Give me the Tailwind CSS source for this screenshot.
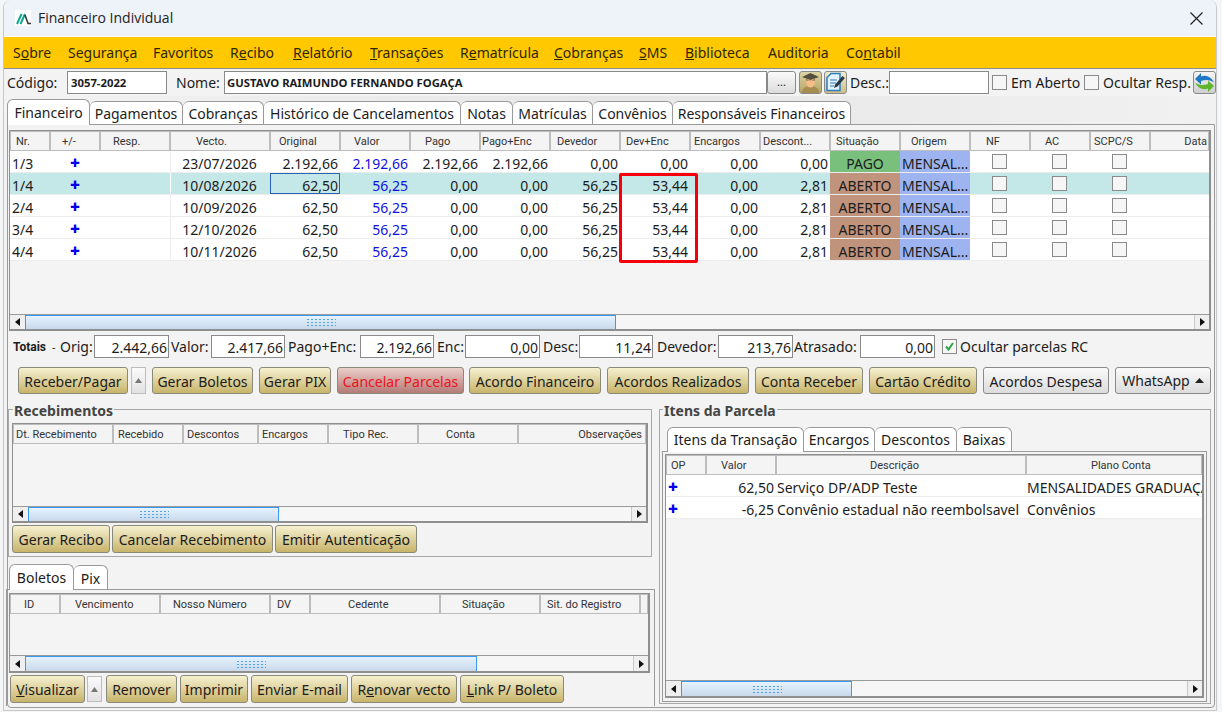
<!DOCTYPE html>
<html><head><meta charset="utf-8"><script src="https://cdn.jsdelivr.net/npm/@tailwindcss/browser@4"></script></head>
<body class="m-0 bg-[#f4f5f6] overflow-hidden">
<div class="w-[1222px] h-[712px] overflow-hidden font-['Noto_Sans',sans-serif] text-[14px] leading-[20px] text-[#1c1c1c] bg-[#f4f5f6] pl-[3px] pr-[5px]">
<div class="h-[711px] border-x border-b border-[#c8c8c8] rounded-t-lg bg-[#f3f3f3] flex flex-col">
  <!-- title -->
  <div class="h-[36px] shrink-0 bg-[#eef3fa] rounded-t-lg flex items-center pl-[11px] pr-[13px] font-['Open_Sans',sans-serif]">
    <div class="w-[16px] h-[16px] bg-white flex items-center justify-center mr-[7px]">
      <svg width="15" height="13" viewBox="0 0 15 13"><path d="M1 12 5.500 2M4.500 12 9 2" stroke="#12a88f" stroke-width="2" fill="none"/><path d="M9 3l3 8.500h3" stroke="#333" stroke-width="1.500" fill="none"/></svg>
    </div>
    <span class="text-[14px] text-[#222]">Financeiro Individual</span>
    <svg class="ml-auto" width="13" height="13" viewBox="0 0 13 13"><path d="M.5.5l12 12M12.500.5l-12 12" stroke="#222" stroke-width="1.200"/></svg>
  </div>
  <!-- menu -->
  <div class="h-[33px] shrink-0 bg-[#ffc800] border-t border-b border-t-white border-b-[#8d8d8d] flex items-center pl-[9px] text-[#2e2600] whitespace-nowrap">
    <span class="w-[55px]">S<u>o</u>bre</span><span class="w-[85px]">Segurança</span><span class="w-[77px]">Favoritos</span><span class="w-[63px]">R<u>e</u>cibo</span><span class="w-[77px]"><u>R</u>elatório</span><span class="w-[90px]"><u>T</u>ransações</span><span class="w-[94px]">R<u>e</u>matrícula</span><span class="w-[85px]"><u>C</u>obranças</span><span class="w-[46px]"><u>S</u>MS</span><span class="w-[83px]"><u>B</u>iblioteca</span><span class="w-[78px]">Auditoria</span><span>Co<u>n</u>tabil</span>
  </div>
  <!-- code row -->
  <div class="h-[27px] shrink-0 flex items-center pl-[3px] whitespace-nowrap">
    <span class="w-[60px] leading-[24px] pt-[1px]">Código:</span>
    <div class="w-[100px] h-[23px] bg-white border border-[#8a8a8a] pl-[3px] text-[11.300px] font-bold leading-[21px]">3057-2022</div>
    <span class="ml-[9px] w-[48px] pt-[1px]">Nome:</span>
    <div class="w-[543px] h-[23px] bg-white border border-[#8a8a8a] pl-[2px] text-[11.300px] font-bold leading-[21px]">GUSTAVO RAIMUNDO FERNANDO FOGAÇA</div>
    <div class="w-[29px] h-[23px] border border-[#8a8a8a] rounded-[3px] bg-gradient-to-b from-[#fafafa] to-[#dcdcdc] text-[11px] text-center leading-[20px]">...</div>
    <div class="ml-[3px] w-[23px] h-[23px] border border-[#8a8a8a] rounded-[3px] bg-gradient-to-b from-[#ddd4a4] to-[#b5a364] flex items-center justify-center">
      <svg width="21" height="21" viewBox="0 0 21 21"><path d="M2 21c0-5 4-7 8.500-7s8.500 2 8.500 7z" fill="#a58d52"/><ellipse cx="10.500" cy="10" rx="4.500" ry="5.500" fill="#f6bd86"/><path d="M2 5l8.500-4 8.500 4-8.500 3z" fill="#55503c"/><path d="M6 7l4.500 2 4.500-2v1.500H6z" fill="#6b6448"/></svg>
    </div>
    <div class="ml-[2px] w-[23px] h-[23px] border border-[#8a8a8a] rounded-[3px] bg-gradient-to-b from-[#f2edcf] to-[#cdbf82] flex items-center justify-center">
      <svg width="21" height="21" viewBox="0 0 21 21"><path d="M6 1.500h9v17H2v-13z" fill="#e6f2fb" stroke="#2b7dc0" stroke-width="1.500"/><path d="M5 8h7M5 11h6M5 14h4" stroke="#2b7dc0" stroke-width="1.200"/><path d="M9 16l1.200-3.500L17.500 4l2.300 2-7.300 8.500z" fill="#26384a"/></svg>
    </div>
    <span class="ml-[3px] w-[39px] pt-[1px]">Desc.:</span>
    <div class="w-[100px] h-[23px] bg-white border border-[#8a8a8a]"></div>
    <div class="ml-[3px] w-[15px] h-[15px] border border-[#8a8a8a] bg-[#f6f6f6]"></div>
    <span class="ml-[4px] w-[73px] pt-[1px]">Em Aberto</span>
    <div class="w-[15px] h-[15px] border border-[#8a8a8a] bg-[#f6f6f6]"></div>
    <span class="ml-[4px] w-[90px] pt-[1px]">Ocultar Resp.</span>
    <div class="w-[23px] h-[23px] border border-[#8a8a8a] rounded-[3px] bg-gradient-to-b from-[#f4f4f4] to-[#cfcfcf] flex items-center justify-center">
      <svg width="21" height="21" viewBox="0 0 21 21"><path d="M1 7l6-6v3.500c5-2 10 0 13 6-3-2.500-8-3.500-13-1.500v3.500z" fill="#1d78c8"/><path d="M20 14l-6 6v-3.500c-5 2-10 0-13-6 3 2.500 8 3.500 13 1.500V8.500z" fill="#5fb52c"/></svg>
    </div>
  </div>
  <!-- main tabs -->
  <div class="h-[28px] shrink-0 flex items-end pl-[3px] bg-gradient-to-r from-[#f3f3f3] via-[#e6e6e6] to-[#f1f1f1] whitespace-nowrap">
    <div class="h-[26px] -mb-px z-10 w-[83px] text-center leading-[26px] bg-white border border-b-0 border-[#9a9a9a] rounded-t-[6px]">Financeiro</div>
    <div class="h-[23px] w-[93px] text-center leading-[24px] bg-white border border-l-0 border-b-0 border-[#9a9a9a] rounded-t-[6px]">Pagamentos</div>
    <div class="h-[23px] w-[81px] text-center leading-[24px] bg-white border border-l-0 border-b-0 border-[#9a9a9a] rounded-t-[6px]">Cobranças</div>
    <div class="h-[23px] w-[197px] text-center leading-[24px] bg-white border border-l-0 border-b-0 border-[#9a9a9a] rounded-t-[6px]">Histórico de Cancelamentos</div>
    <div class="h-[23px] w-[52px] text-center leading-[24px] bg-white border border-l-0 border-b-0 border-[#9a9a9a] rounded-t-[6px]">Notas</div>
    <div class="h-[23px] w-[80px] text-center leading-[24px] bg-white border border-l-0 border-b-0 border-[#9a9a9a] rounded-t-[6px]">Matrículas</div>
    <div class="h-[23px] w-[80px] text-center leading-[24px] bg-white border border-l-0 border-b-0 border-[#9a9a9a] rounded-t-[6px]">Convênios</div>
    <div class="h-[23px] w-[178px] text-center leading-[24px] bg-white border border-l-0 border-b-0 border-[#9a9a9a] rounded-t-[6px]">Responsáveis Financeiros</div>
  </div>
  <!-- main panel -->
  <div class="flex-1 ml-[3px] mr-[1px] border border-[#9a9a9a] rounded-b-[4px] bg-[#f3f3f3] flex flex-col pl-[1px] pt-[5px] min-h-0">
    <!-- main grid -->
    <div class="h-[201px] shrink-0 border-l border-t border-r-2 border-b-2 border-[#8f8f8f] flex flex-col bg-[#f4f4f4] w-[1202px]">
      <div class="h-[20px] shrink-0 flex font-['Roboto',sans-serif] text-[11px] leading-[19px] text-[#333] whitespace-nowrap">
        <div class="w-[40px] border border-[#bdbdbd] pl-[5px]">Nr.</div><div class="w-[50px] border border-[#bdbdbd] pl-[11px]">+/-</div><div class="w-[70px] border border-[#bdbdbd] pl-[12px]">Resp.</div><div class="w-[100px] border border-[#bdbdbd] pl-[25px]">Vecto.</div><div class="w-[70px] border border-[#bdbdbd] pl-[8px]">Original</div><div class="w-[70px] border border-[#bdbdbd] pl-[13px]">Valor</div><div class="w-[70px] border border-[#bdbdbd] pl-[14px]">Pago</div><div class="w-[70px] border border-[#bdbdbd] pl-[1px]">Pago+Enc</div><div class="w-[70px] border border-[#bdbdbd] pl-[6px]">Devedor</div><div class="w-[70px] border border-[#bdbdbd] pl-[5px]">Dev+Enc</div><div class="w-[70px] border border-[#bdbdbd] pl-[3px]">Encargos</div><div class="w-[70px] border border-[#bdbdbd] pl-[2px]">Descont...</div><div class="w-[70px] border border-[#bdbdbd] pl-[5px]">Situação</div><div class="w-[70px] border border-[#bdbdbd] pl-[10px]">Origem</div><div class="w-[60px] border border-[#bdbdbd] pl-[15px]">NF</div><div class="w-[60px] border border-[#bdbdbd] pl-[14px]">AC</div><div class="w-[60px] border border-[#bdbdbd] pl-[3px]">SCPC/S</div><div class="flex-1 border border-[#bdbdbd] text-right pr-[1px]">Data</div>
      </div>
      <div class="relative">
        <div class="h-[22px] flex bg-white leading-[25px] border-b border-[#ececec]">
          <div class="w-[40px] pl-[2px]">1/3</div><div class="w-[50px] text-center text-[#0000ee] text-[17px] font-black leading-[24px]">+</div><div class="w-[70px]"></div><div class="w-[100px] text-center pr-[2px] border-l border-[#ececec]">23/07/2026</div><div class="w-[70px] text-right pr-[2px]">2.192,66</div><div class="w-[70px] text-right pr-[2px] text-[#1111dd]">2.192,66</div><div class="w-[70px] text-right pr-[2px]">2.192,66</div><div class="w-[70px] text-right pr-[2px]">2.192,66</div><div class="w-[70px] text-right pr-[2px]">0,00</div><div class="w-[70px] text-right pr-[2px]">0,00</div><div class="w-[70px] text-right pr-[2px]">0,00</div><div class="w-[70px] text-right pr-[2px]">0,00</div><div class="w-[70px] text-center bg-[#78c07c]">PAGO</div><div class="w-[70px] bg-[#9db4f0] pl-[2px] whitespace-nowrap overflow-hidden">MENSAL...</div><div class="w-[60px] pr-[2px] flex items-center justify-center"><div class="w-[15px] h-[15px] border border-[#8a8a8a] bg-[#f6f6f6]"></div></div><div class="w-[60px] pr-[2px] flex items-center justify-center"><div class="w-[15px] h-[15px] border border-[#8a8a8a] bg-[#f6f6f6]"></div></div><div class="w-[60px] pr-[2px] flex items-center justify-center"><div class="w-[15px] h-[15px] border border-[#8a8a8a] bg-[#f6f6f6]"></div></div><div class="flex-1"></div>
        </div>
        <div class="h-[22px] flex bg-[#c3e8e7] leading-[25px] border-b border-[#ececec]">
          <div class="w-[40px] pl-[2px]">1/4</div><div class="w-[50px] text-center text-[#0000ee] text-[17px] font-black leading-[24px]">+</div><div class="w-[70px]"></div><div class="w-[100px] text-center pr-[2px] border-l border-white">10/08/2026</div><div class="w-[70px] text-right pr-[1px] border border-[#2a62b8] bg-[#c3e8e7] leading-[23px]">62,50</div><div class="w-[70px] text-right pr-[2px] text-[#1111dd]">56,25</div><div class="w-[70px] text-right pr-[2px]">0,00</div><div class="w-[70px] text-right pr-[2px]">0,00</div><div class="w-[70px] text-right pr-[2px]">56,25</div><div class="w-[70px] text-right pr-[2px]">53,44</div><div class="w-[70px] text-right pr-[2px]">0,00</div><div class="w-[70px] text-right pr-[2px]">2,81</div><div class="w-[70px] text-center bg-[#c0937c]">ABERTO</div><div class="w-[70px] bg-[#9db4f0] pl-[2px] whitespace-nowrap overflow-hidden">MENSAL...</div><div class="w-[60px] pr-[2px] flex items-center justify-center"><div class="w-[15px] h-[15px] border border-[#8a8a8a] bg-[#f6f6f6]"></div></div><div class="w-[60px] pr-[2px] flex items-center justify-center"><div class="w-[15px] h-[15px] border border-[#8a8a8a] bg-[#f6f6f6]"></div></div><div class="w-[60px] pr-[2px] flex items-center justify-center"><div class="w-[15px] h-[15px] border border-[#8a8a8a] bg-[#f6f6f6]"></div></div><div class="flex-1"></div>
        </div>
        <div class="h-[22px] flex bg-white leading-[25px] border-b border-[#ececec]">
          <div class="w-[40px] pl-[2px]">2/4</div><div class="w-[50px] text-center text-[#0000ee] text-[17px] font-black leading-[24px]">+</div><div class="w-[70px]"></div><div class="w-[100px] text-center pr-[2px] border-l border-[#ececec]">10/09/2026</div><div class="w-[70px] text-right pr-[2px]">62,50</div><div class="w-[70px] text-right pr-[2px] text-[#1111dd]">56,25</div><div class="w-[70px] text-right pr-[2px]">0,00</div><div class="w-[70px] text-right pr-[2px]">0,00</div><div class="w-[70px] text-right pr-[2px]">56,25</div><div class="w-[70px] text-right pr-[2px]">53,44</div><div class="w-[70px] text-right pr-[2px]">0,00</div><div class="w-[70px] text-right pr-[2px]">2,81</div><div class="w-[70px] text-center bg-[#c0937c]">ABERTO</div><div class="w-[70px] bg-[#9db4f0] pl-[2px] whitespace-nowrap overflow-hidden">MENSAL...</div><div class="w-[60px] pr-[2px] flex items-center justify-center"><div class="w-[15px] h-[15px] border border-[#8a8a8a] bg-[#f6f6f6]"></div></div><div class="w-[60px] pr-[2px] flex items-center justify-center"><div class="w-[15px] h-[15px] border border-[#8a8a8a] bg-[#f6f6f6]"></div></div><div class="w-[60px] pr-[2px] flex items-center justify-center"><div class="w-[15px] h-[15px] border border-[#8a8a8a] bg-[#f6f6f6]"></div></div><div class="flex-1"></div>
        </div>
        <div class="h-[22px] flex bg-white leading-[25px] border-b border-[#ececec]">
          <div class="w-[40px] pl-[2px]">3/4</div><div class="w-[50px] text-center text-[#0000ee] text-[17px] font-black leading-[24px]">+</div><div class="w-[70px]"></div><div class="w-[100px] text-center pr-[2px] border-l border-[#ececec]">12/10/2026</div><div class="w-[70px] text-right pr-[2px]">62,50</div><div class="w-[70px] text-right pr-[2px] text-[#1111dd]">56,25</div><div class="w-[70px] text-right pr-[2px]">0,00</div><div class="w-[70px] text-right pr-[2px]">0,00</div><div class="w-[70px] text-right pr-[2px]">56,25</div><div class="w-[70px] text-right pr-[2px]">53,44</div><div class="w-[70px] text-right pr-[2px]">0,00</div><div class="w-[70px] text-right pr-[2px]">2,81</div><div class="w-[70px] text-center bg-[#c0937c]">ABERTO</div><div class="w-[70px] bg-[#9db4f0] pl-[2px] whitespace-nowrap overflow-hidden">MENSAL...</div><div class="w-[60px] pr-[2px] flex items-center justify-center"><div class="w-[15px] h-[15px] border border-[#8a8a8a] bg-[#f6f6f6]"></div></div><div class="w-[60px] pr-[2px] flex items-center justify-center"><div class="w-[15px] h-[15px] border border-[#8a8a8a] bg-[#f6f6f6]"></div></div><div class="w-[60px] pr-[2px] flex items-center justify-center"><div class="w-[15px] h-[15px] border border-[#8a8a8a] bg-[#f6f6f6]"></div></div><div class="flex-1"></div>
        </div>
        <div class="h-[22px] flex bg-white leading-[25px] border-b border-[#ececec]">
          <div class="w-[40px] pl-[2px]">4/4</div><div class="w-[50px] text-center text-[#0000ee] text-[17px] font-black leading-[24px]">+</div><div class="w-[70px]"></div><div class="w-[100px] text-center pr-[2px] border-l border-[#ececec]">10/11/2026</div><div class="w-[70px] text-right pr-[2px]">62,50</div><div class="w-[70px] text-right pr-[2px] text-[#1111dd]">56,25</div><div class="w-[70px] text-right pr-[2px]">0,00</div><div class="w-[70px] text-right pr-[2px]">0,00</div><div class="w-[70px] text-right pr-[2px]">56,25</div><div class="w-[70px] text-right pr-[2px]">53,44</div><div class="w-[70px] text-right pr-[2px]">0,00</div><div class="w-[70px] text-right pr-[2px]">2,81</div><div class="w-[70px] text-center bg-[#c0937c]">ABERTO</div><div class="w-[70px] bg-[#9db4f0] pl-[2px] whitespace-nowrap overflow-hidden">MENSAL...</div><div class="w-[60px] pr-[2px] flex items-center justify-center"><div class="w-[15px] h-[15px] border border-[#8a8a8a] bg-[#f6f6f6]"></div></div><div class="w-[60px] pr-[2px] flex items-center justify-center"><div class="w-[15px] h-[15px] border border-[#8a8a8a] bg-[#f6f6f6]"></div></div><div class="w-[60px] pr-[2px] flex items-center justify-center"><div class="w-[15px] h-[15px] border border-[#8a8a8a] bg-[#f6f6f6]"></div></div><div class="flex-1"></div>
        </div>
        <div class="absolute left-[609px] top-[22px] w-[79px] h-[90px] border-[3px] border-[#f5000a] rounded-[2px]"></div>
      </div>
      <div class="flex-1"></div>
      <!-- scrollbar -->
      <div class="h-[15px] shrink-0 flex border-t border-[#9a9a9a] bg-[#f6f6f6]">
        <div class="w-[15px] flex items-center justify-center bg-[#efefef]"><svg width="5" height="8"><path d="M5 0v8L0 4z" fill="#111"/></svg></div>
        <div class="w-[591px] bg-gradient-to-b from-[#e6f3ff] to-[#c9d9ea] border-x border-t border-[#3b9af0] flex items-center justify-center"><div class="w-[30px] h-[9px] bg-[radial-gradient(#4aa3f0_1px,transparent_1px)] bg-[length:4px_3px]"></div></div>
        <div class="flex-1"></div>
        <div class="w-[15px] flex items-center justify-center bg-[#efefef] border-l border-[#c8c8c8]"><svg width="5" height="8"><path d="M0 0v8l5-4z" fill="#111"/></svg></div>
      </div>
    </div>
    <!-- totals -->
    <div class="h-[23px] mt-[4px] shrink-0 flex items-center pl-[4px] whitespace-nowrap leading-[24px]">
      <span class="font-['Roboto',sans-serif] text-[12px] font-bold w-[39px]">Totais</span><span class="text-[11px] w-[8px]">-</span>
      <span class="w-[34px]">Orig:</span><div class="w-[75px] h-[23px] border border-[#8a8a8a] bg-white text-right pr-[1px] leading-[24px]">2.442,66</div>
      <span class="ml-[2px] w-[40px]">Valor:</span><div class="w-[74px] h-[23px] border border-[#8a8a8a] bg-white text-right pr-[1px] leading-[24px]">2.417,66</div>
      <span class="ml-[3px] w-[72px]">Pago+Enc:</span><div class="w-[74px] h-[23px] border border-[#8a8a8a] bg-white text-right pr-[1px] leading-[24px]">2.192,66</div>
      <span class="ml-[3px] w-[28px]">Enc:</span><div class="w-[75px] h-[23px] border border-[#8a8a8a] bg-white text-right pr-[1px] leading-[24px]">0,00</div>
      <span class="ml-[3px] w-[36px]">Desc:</span><div class="w-[74px] h-[23px] border border-[#8a8a8a] bg-white text-right pr-[1px] leading-[24px]">11,24</div>
      <span class="ml-[4px] w-[61px]">Devedor:</span><div class="w-[75px] h-[23px] border border-[#8a8a8a] bg-white text-right pr-[1px] leading-[24px]">213,76</div>
      <span class="ml-[1px] w-[66px]">Atrasado:</span><div class="w-[75px] h-[23px] border border-[#8a8a8a] bg-white text-right pr-[1px] leading-[24px]">0,00</div>
      <div class="ml-[7px] w-[15px] h-[15px] border border-[#8a8a8a] bg-[#f6f6f6] flex items-center justify-center"><svg width="11" height="11" viewBox="0 0 11 11"><path d="M2 5.500l2.500 3L9 2" stroke="#2fa84a" stroke-width="2" fill="none"/></svg></div>
      <span class="ml-[3px]">Ocultar parcelas RC</span>
    </div>
    <!-- action buttons -->
    <div class="h-[27px] mt-[9px] shrink-0 flex pl-[9px] gap-[6px] whitespace-nowrap leading-[27px] text-center">
      <div class="w-[110px] border border-[#8a8a7a] rounded-[3px] bg-gradient-to-b from-[#f5f0cf] to-[#c8b46a]">Receber/Pagar</div>
      <div class="-ml-[3px] w-[15px] border border-[#bdbdbd] bg-gradient-to-b from-[#fafafa] to-[#e2e2e2] flex items-center justify-center"><svg width="7" height="5"><path d="M0 5h7L3.500 0z" fill="#777"/></svg></div>
      <div class="w-[101px] border border-[#8a8a7a] rounded-[3px] bg-gradient-to-b from-[#f5f0cf] to-[#c8b46a]">Gerar Boletos</div>
      <div class="w-[72px] border border-[#8a8a7a] rounded-[3px] bg-gradient-to-b from-[#f5f0cf] to-[#c8b46a]">Gerar PIX</div>
      <div class="w-[127px] border border-[#8a8a7a] rounded-[3px] bg-gradient-to-b from-[#ebcfc9] to-[#b47b77] text-[#f01020]">Cancelar Parcelas</div>
      <div class="w-[132px] -ml-px border border-[#8a8a7a] rounded-[3px] bg-gradient-to-b from-[#f5f0cf] to-[#c8b46a]">Acordo Financeiro</div>
      <div class="w-[142px] border border-[#8a8a7a] rounded-[3px] bg-gradient-to-b from-[#f5f0cf] to-[#c8b46a]">Acordos Realizados</div>
      <div class="w-[108px] border border-[#8a8a7a] rounded-[3px] bg-gradient-to-b from-[#f5f0cf] to-[#c8b46a]">Conta Receber</div>
      <div class="w-[108px] border border-[#8a8a7a] rounded-[3px] bg-gradient-to-b from-[#f5f0cf] to-[#c8b46a]">Cartão Crédito</div>
      <div class="w-[126px] border border-[#8a8a8a] rounded-[3px] bg-gradient-to-b from-[#fafafa] to-[#dcdcdc]">Acordos Despesa</div>
      <div class="w-[96px] border border-[#8a8a8a] rounded-[3px] bg-gradient-to-b from-[#fafafa] to-[#dcdcdc] flex items-center justify-center gap-[5px]">WhatsApp<svg width="9" height="5"><path d="M0 5h9L4.500 0z" fill="#222"/></svg></div>
    </div>
    <!-- lower -->
    <div class="flex-1 mt-[15px] flex min-h-0">
      <div class="w-[647px] shrink-0 -ml-[2px] flex flex-col">
        <!-- recebimentos -->
        <div class="relative h-[148px] ml-[1px] w-[644px] shrink-0 border border-[#a8a8a8] pt-[13px] px-[3px]">
          <span class="absolute left-[4px] -top-[7px] bg-[#f3f3f3] text-[14px] font-bold text-[#444] px-[1px] leading-[16px]">Recebimentos</span>
          <div class="h-[100px] border-l border-t border-r-2 border-b-2 border-[#8f8f8f] flex flex-col bg-[#f4f4f4]">
            <div class="h-[20px] shrink-0 flex font-['Roboto',sans-serif] text-[11px] leading-[19px] text-[#333] whitespace-nowrap">
              <div class="w-[100px] border border-[#bdbdbd] pl-[2px]">Dt. Recebimento</div><div class="w-[70px] border border-[#bdbdbd] pl-[4px]">Recebido</div><div class="w-[75px] border border-[#bdbdbd] pl-[3px]">Descontos</div><div class="w-[70px] border border-[#bdbdbd] pl-[3px]">Encargos</div><div class="w-[90px] border border-[#bdbdbd] pl-[14px]">Tipo Rec.</div><div class="w-[100px] border border-[#bdbdbd] pl-[27px]">Conta</div><div class="flex-1 border border-[#bdbdbd] text-right pr-[3px]">Observações</div>
            </div>
            <div class="flex-1"></div>
            <div class="h-[15px] shrink-0 flex border-t border-[#9a9a9a] bg-[#f6f6f6]">
              <div class="w-[15px] flex items-center justify-center bg-[#efefef]"><svg width="5" height="8"><path d="M5 0v8L0 4z" fill="#111"/></svg></div>
              <div class="w-[251px] bg-gradient-to-b from-[#e6f3ff] to-[#c9d9ea] border-x border-t border-[#3b9af0] flex items-center justify-center"><div class="w-[30px] h-[9px] bg-[radial-gradient(#4aa3f0_1px,transparent_1px)] bg-[length:4px_3px]"></div></div>
              <div class="flex-1"></div>
              <div class="w-[15px] flex items-center justify-center bg-[#efefef] border-l border-[#c8c8c8]"><svg width="5" height="8"><path d="M0 0v8l5-4z" fill="#111"/></svg></div>
            </div>
          </div>
          <div class="flex mt-[2px] h-[28px] gap-[2px] leading-[28px] text-center whitespace-nowrap">
            <div class="w-[98px] border border-[#8a8a7a] rounded-[3px] bg-gradient-to-b from-[#f5f0cf] to-[#c8b46a]">Gerar Recibo</div>
            <div class="w-[161px] border border-[#8a8a7a] rounded-[3px] bg-gradient-to-b from-[#f5f0cf] to-[#c8b46a]">Cancelar Recebimento</div>
            <div class="w-[142px] border border-[#8a8a7a] rounded-[3px] bg-gradient-to-b from-[#f5f0cf] to-[#c8b46a]">Emitir Autenticação</div>
          </div>
        </div>
        <!-- boletos tabs -->
        <div class="h-[25px] mt-[7px] shrink-0 flex items-end pl-[2px]">
          <div class="h-[26px] -mb-px z-10 w-[65px] text-center leading-[26px] bg-white border border-b-0 border-[#9a9a9a] rounded-t-[6px]">Boletos</div>
          <div class="h-[24px] w-[34px] text-center leading-[25px] bg-white border border-l-0 border-b-0 border-[#9a9a9a] rounded-t-[6px]">Pix</div>
        </div>
        <div class="h-[117px] shrink-0 w-[649px] -ml-[1px] border-t border-x border-[#9a9a9a] pt-[3px] pl-[2px] pr-[4px]">
          <div class="h-[80px] border-l border-t border-r-2 border-b-2 border-[#8f8f8f] flex flex-col bg-[#f4f4f4]">
            <div class="h-[20px] shrink-0 flex font-['Roboto',sans-serif] text-[11px] leading-[19px] text-[#333] whitespace-nowrap">
              <div class="w-[50px] border border-[#bdbdbd] pl-[13px]">ID</div><div class="w-[100px] border border-[#bdbdbd] pl-[14px]">Vencimento</div><div class="w-[110px] border border-[#bdbdbd] pl-[12px]">Nosso Número</div><div class="w-[40px] border border-[#bdbdbd] pl-[6px]">DV</div><div class="w-[130px] border border-[#bdbdbd] pl-[37px]">Cedente</div><div class="w-[100px] border border-[#bdbdbd] pl-[21px]">Situação</div><div class="w-[100px] border border-[#bdbdbd] pl-[6px]">Sit. do Registro</div><div class="flex-1 border border-[#bdbdbd]"></div>
            </div>
            <div class="flex-1"></div>
            <div class="h-[16px] shrink-0 flex border-t border-[#9a9a9a] bg-[#f6f6f6]">
              <div class="w-[15px] flex items-center justify-center bg-[#efefef]"><svg width="5" height="8"><path d="M5 0v8L0 4z" fill="#111"/></svg></div>
              <div class="w-[452px] bg-gradient-to-b from-[#e6f3ff] to-[#c9d9ea] border-x border-t border-[#3b9af0] flex items-center justify-center"><div class="w-[30px] h-[9px] bg-[radial-gradient(#4aa3f0_1px,transparent_1px)] bg-[length:4px_3px]"></div></div>
              <div class="flex-1"></div>
              <div class="w-[15px] flex items-center justify-center bg-[#efefef] border-l border-[#c8c8c8]"><svg width="5" height="8"><path d="M0 0v8l5-4z" fill="#111"/></svg></div>
            </div>
          </div>
          <div class="flex mt-[2px] ml-[1px] h-[28px] gap-[3px] leading-[28px] text-center whitespace-nowrap">
            <div class="w-[75px] border border-[#8a8a7a] rounded-[3px] bg-gradient-to-b from-[#f5f0cf] to-[#c8b46a]"><u>V</u>isualizar</div>
            <div class="-ml-px w-[15px] h-[26px] mt-[1px] border border-[#bdbdbd] bg-gradient-to-b from-[#fafafa] to-[#e2e2e2] flex items-center justify-center"><svg width="7" height="5"><path d="M0 5h7L3.500 0z" fill="#777"/></svg></div>
            <div class="ml-px w-[71px] border border-[#8a8a7a] rounded-[3px] bg-gradient-to-b from-[#f5f0cf] to-[#c8b46a]">Remover</div>
            <div class="w-[68px] border border-[#8a8a7a] rounded-[3px] bg-gradient-to-b from-[#f5f0cf] to-[#c8b46a]">Imprimir</div>
            <div class="w-[97px] border border-[#8a8a7a] rounded-[3px] bg-gradient-to-b from-[#f5f0cf] to-[#c8b46a]">Enviar E-mail</div>
            <div class="w-[106px] border border-[#8a8a7a] rounded-[3px] bg-gradient-to-b from-[#f5f0cf] to-[#c8b46a]">R<u>e</u>novar vecto</div>
            <div class="w-[104px] border border-[#8a8a7a] rounded-[3px] bg-gradient-to-b from-[#f5f0cf] to-[#c8b46a]"><u>L</u>ink P/ Boleto</div>
          </div>
        </div>
      </div>
      <!-- itens -->
      <div class="relative ml-[5px] w-[552px] h-[295px] shrink-0 border border-[#a8a8a8] pt-[16px] px-[2px]">
        <span class="absolute left-[3px] -top-[7px] bg-[#f3f3f3] text-[14px] font-bold text-[#444] px-[1px] leading-[16px]">Itens da Parcela</span>
        <div class="h-[25px] flex items-end pl-[5px] whitespace-nowrap">
          <div class="h-[25px] -mb-px z-10 w-[137px] text-center leading-[24px] bg-white border border-b-0 border-[#9a9a9a] rounded-t-[6px]">Itens da Transação</div>
          <div class="h-[24px] w-[71px] text-center leading-[24px] bg-white border border-l-0 border-b-0 border-[#9a9a9a] rounded-t-[6px]">Encargos</div>
          <div class="h-[24px] w-[82px] text-center leading-[24px] bg-white border border-l-0 border-b-0 border-[#9a9a9a] rounded-t-[6px]">Descontos</div>
          <div class="h-[24px] w-[55px] text-center leading-[24px] bg-white border border-l-0 border-b-0 border-[#9a9a9a] rounded-t-[6px]">Baixas</div>
        </div>
        <div class="h-[251px] border border-[#9a9a9a] pt-[2px] pb-[3px] px-[2px] w-[545px]">
          <div class="h-full border-l border-t border-r-2 border-b-2 border-[#8f8f8f] flex flex-col bg-[#f4f4f4]">
            <div class="h-[20px] shrink-0 flex font-['Roboto',sans-serif] text-[11px] leading-[19px] text-[#333] whitespace-nowrap">
              <div class="w-[40px] border border-[#bdbdbd] pl-[4px]">OP</div><div class="w-[70px] border border-[#bdbdbd] pl-[14px]">Valor</div><div class="w-[250px] border border-[#bdbdbd] pl-[93px]">Descrição</div><div class="flex-1 border border-[#bdbdbd] pl-[64px]">Plano Conta</div>
            </div>
            <div class="h-[22px] flex bg-white leading-[25px] border-b border-[#ececec] whitespace-nowrap overflow-hidden">
              <div class="w-[40px] pl-[2px] text-[#0000ee] text-[17px] font-black leading-[24px]">+</div><div class="w-[70px] text-right pr-[2px]">62,50</div><div class="w-[250px] pl-[1px]">Serviço DP/ADP Teste</div><div class="flex-1 pl-[1px] overflow-hidden">MENSALIDADES GRADUAÇÃO</div>
            </div>
            <div class="h-[22px] flex bg-white leading-[25px] border-b border-[#ececec] whitespace-nowrap overflow-hidden">
              <div class="w-[40px] pl-[2px] text-[#0000ee] text-[17px] font-black leading-[24px]">+</div><div class="w-[70px] text-right pr-[2px]">-6,25</div><div class="w-[250px] pl-[1px]">Convênio estadual não reembolsavel</div><div class="flex-1 pl-[1px]">Convênios</div>
            </div>
            <div class="flex-1"></div>
            <div class="h-[16px] shrink-0 flex border-t border-[#9a9a9a] bg-[#f6f6f6]">
              <div class="w-[15px] flex items-center justify-center bg-[#efefef]"><svg width="5" height="8"><path d="M5 0v8L0 4z" fill="#111"/></svg></div>
              <div class="w-[171px] bg-gradient-to-b from-[#e6f3ff] to-[#c9d9ea] border-x border-t border-[#3b9af0] flex items-center justify-center"><div class="w-[30px] h-[9px] bg-[radial-gradient(#4aa3f0_1px,transparent_1px)] bg-[length:4px_3px]"></div></div>
              <div class="flex-1"></div>
              <div class="w-[15px] flex items-center justify-center bg-[#efefef] border-l border-[#c8c8c8]"><svg width="5" height="8"><path d="M0 0v8l5-4z" fill="#111"/></svg></div>
            </div>
          </div>
        </div>
      </div>
    </div>
  </div>
  <div class="h-[2px] shrink-0"></div>
</div>
</div>
</body></html>
